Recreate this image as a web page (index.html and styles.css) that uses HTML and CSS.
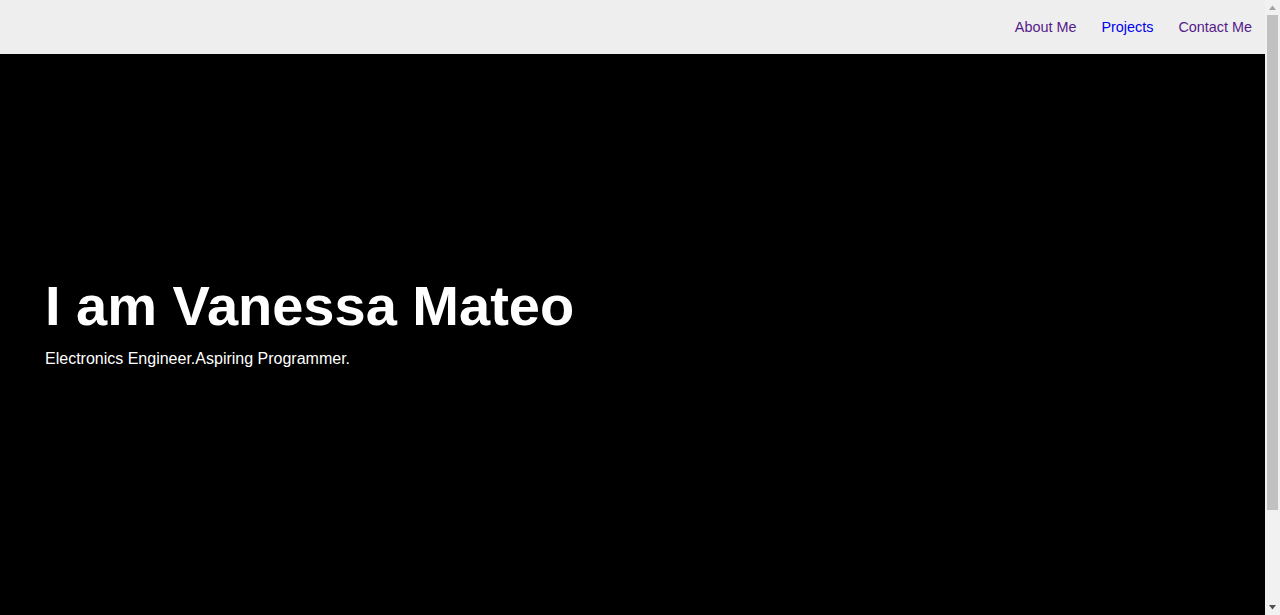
FILE: index.html
```html
<!DOCTYPE html>
<html lang="en">
<head>
<meta charset="utf-8">
<title>Vanessa Mateo</title>
<link rel="stylesheet" href="styles.css">
</head>
<body>
<div class="page">
  <nav class="navbar">
    <a class="nav-link visited" href="#about">About Me</a>
    <a class="nav-link" href="#projects">Projects</a>
    <a class="nav-link visited" href="#contact">Contact Me</a>
  </nav>
  <section class="hero" id="welcome-section">
    <h1 class="hero-title">I am Vanessa Mateo</h1>
    <p class="hero-sub">Electronics Engineer.Aspiring Programmer.</p>
  </section>
</div>
<div class="scrollbar" aria-hidden="true">
  <svg class="sb-arrow" width="15" height="15" viewBox="0 0 15 15"><polygon points="4,10 11,10 7.5,5.5" fill="#a3a3a3"/></svg>
  <div class="sb-track"><div class="sb-thumb"></div></div>
  <svg class="sb-arrow" width="15" height="15" viewBox="0 0 15 15"><polygon points="4,5 11,5 7.5,9.5" fill="#505050"/></svg>
</div>
</body>
</html>
```
FILE: styles.css
```css
html, body {
  margin: 0;
  padding: 0;
}
body {
  font-family: "Liberation Sans", Arial, sans-serif;
  background: #000;
}
.page {
  margin-right: 15px;
}
.navbar {
  height: 54px;
  background: #eeeeee;
  display: flex;
  justify-content: flex-end;
  align-items: center;
  gap: 25px;
  padding-right: 13px;
  box-sizing: border-box;
}
.nav-link {
  font-size: 14.4px;
  color: #0000ee;
  text-decoration: none;
  line-height: normal;
}
.nav-link.visited {
  color: #551a8b;
}
.hero {
  height: 673px;
  box-sizing: border-box;
  background: #000;
  color: #fff;
  padding: 219px 45px 0;
}
.hero-title {
  margin: 0;
  font-size: 56px;
  font-weight: bold;
  line-height: normal;
}
.hero-sub {
  margin: 12px 0 0;
  font-size: 16px;
  line-height: normal;
}
.scrollbar {
  position: fixed;
  top: 0;
  right: 0;
  width: 15px;
  height: 100vh;
  background: #f1f1f1;
  display: flex;
  flex-direction: column;
}
.sb-arrow {
  display: block;
  flex: none;
}
.sb-track {
  flex: 1;
  padding: 0 2px;
}
.sb-thumb {
  height: 495px;
  background: #c1c1c1;
}
```
